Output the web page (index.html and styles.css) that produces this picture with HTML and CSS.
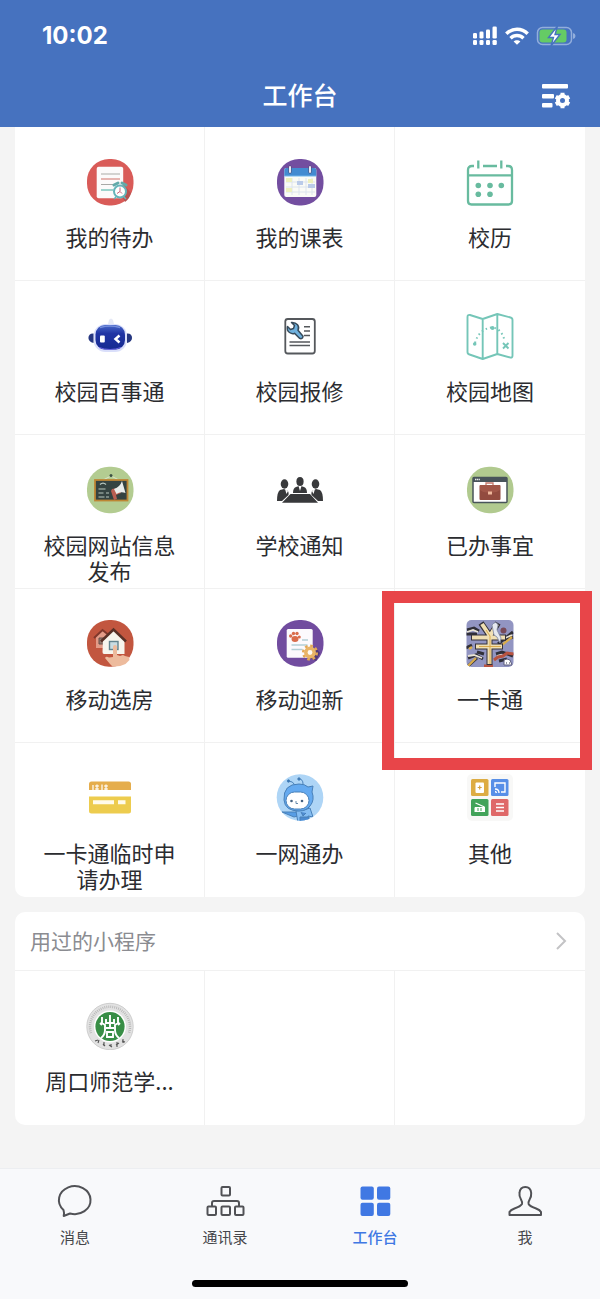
FILE: index.html
```html
<!DOCTYPE html>
<html lang="zh-CN">
<head>
<meta charset="utf-8">
<meta name="viewport" content="width=device-width, initial-scale=1">
<title>工作台</title>
<link rel="stylesheet" href="styles.css">
</head>
<body>
<header class="header">
  <div class="status">
    <span class="time">10:02</span>
    <div class="status-icons">
      <svg width="26" height="20" viewBox="0 0 26 20" fill="#fff"><rect x="1" y="7" width="4" height="5.500" rx="1.300"/><rect x="7.500" y="5.500" width="4" height="7" rx="1.300"/><rect x="14" y="3.500" width="4" height="9" rx="1.300"/><rect x="20.500" y="0.500" width="4.300" height="12" rx="1.300"/><rect x="1" y="14" width="4" height="5" rx="1.300"/><rect x="7.500" y="14" width="4" height="5" rx="1.300"/><rect x="14" y="14" width="4" height="5" rx="1.300"/><rect x="20.500" y="14" width="4.300" height="5" rx="1.300"/></svg>
      <svg width="24" height="20" viewBox="0 0 24 20" fill="none" stroke="#fff" stroke-width="3.400"><path d="M1.300 7.800C7.300 1.700 16.700 1.700 22.700 7.800"/><path d="M5.500 12.200C9.200 8.600 14.800 8.600 18.500 12.200"/><path d="M12 18.800L8.600 15.400C10.400 13.700 13.600 13.700 15.400 15.400Z" fill="#fff" stroke="none"/></svg>
      <svg width="40" height="20" viewBox="0 0 40 20"><rect x="1.500" y="1.500" width="34" height="17" rx="5" fill="none" stroke="#92aedc" stroke-width="1.500"/><path d="M37 7Q39.500 7.500 39.500 10T37 13Z" fill="#92aedc"/><rect x="3.500" y="3.500" width="27" height="13" rx="3" fill="#65cb65"/><path d="M21.500 0L12.500 11.500H17.500L15 20L24 8.500H19Z" fill="#fff" stroke="#4672bf" stroke-width="1.400"/></svg>
    </div>
  </div>
  <div class="titlebar">
    <h1>工作台</h1>
    <button class="settings" type="button" aria-label="设置">
      <svg width="30" height="28" viewBox="0 0 30 28"><g fill="#fff"><rect x="1" y="2" width="26" height="4.500" rx="1"/><rect x="1" y="12" width="12" height="4.500" rx="1"/><rect x="1" y="21" width="10.500" height="4.500" rx="1"/></g><g fill="none" stroke="#fff"><circle cx="21.500" cy="18.500" r="4.500" stroke-width="4"/><path d="M21.500 10.800v3M21.500 23.200v3M14.800 14.700l2.600 1.500M25.600 20.800l2.600 1.500M14.800 22.300l2.600-1.500M25.600 16.200l2.600-1.500" stroke-width="4"/></g></svg>
    </button>
  </div>
</header>

<main class="content">
  <section class="card card-first">
    <ul class="grid">
      <li class="cell"><a class="app" href="#todo">
        <svg class="icon" viewBox="0 0 48 48"><rect x="1" y="1" width="46.500" height="46.500" rx="22" fill="#d95b58"/><path d="M14 40h23l2 4c3-2 5-5 6-9L38 27Z" fill="#b65250"/><rect x="10.700" y="8.700" width="26.500" height="31.500" rx="2" fill="#fcfafa"/><g stroke-width="1.200" fill="none"><path d="M15 16h19M15 26.500h14" stroke="#a9a9a6"/><path d="M15 21h19" stroke="#d88880"/><path d="M15 32h12" stroke="#5eb9ad"/></g><path d="M28 27l4-2M36 25l4 2" stroke="#62aaa9" stroke-width="3" stroke-linecap="round"/><circle cx="34" cy="33.500" r="6" fill="#fff" stroke="#65b4b9" stroke-width="2"/><path d="M34 29.500v4l-3 2M34 33.500l2 2" stroke="#c7667b" fill="none"/><path d="M30 39l-2 2M38 39l2 2" stroke="#65b4b9" stroke-width="1.500"/></svg>
        <span class="label">我的待办</span></a></li>
      <li class="cell"><a class="app" href="#timetable">
        <svg class="icon" viewBox="0 0 48 48"><rect x="1" y="1" width="46.500" height="46.500" rx="22" fill="#734ea0"/><rect x="8.300" y="10" width="32" height="29" rx="2" fill="#fafbf6"/><path d="M8.300 18v-6q0-2 2-2h28q2 0 2 2v6Z" fill="#438bd1"/><path d="M8.300 18h32" stroke="#71b5eb"/><g stroke="#dce4ed" stroke-width="1"><path d="M10 24h29M10 29h29M10 34h29M16 20v17M23 20v17M30 20v17M36 20v17"/></g><path d="M10 20h6v4h-6zM32 21h5v4h-5zM10 30h6v4h-6z" fill="#edf0bd"/><path d="M21 23h6v4h-6zM32 26h7v4h-7z" fill="#bacbe9"/><g stroke="#4e4972" stroke-width="3" stroke-linecap="round"><path d="M14 9v5M34 9v5"/></g><g stroke="#e8e8f4" stroke-width="2" stroke-linecap="round"><path d="M14 9v5M34 9v5"/></g></svg>
        <span class="label">我的课表</span></a></li>
      <li class="cell"><a class="app" href="#calendar">
        <svg class="icon" viewBox="0 0 48 48" fill="none" stroke="#68bb9f" stroke-width="2.300"><path d="M8 8H6Q2 8 2 12v31q0 3.500 3.500 3.500h37q3.500 0 3.500-3.500V12q0-4-4-4h-2M17 8h14M2 17.300h44M12.300 2.500v8M35.300 2.500v8"/><g fill="#68bb9f" stroke="none"><circle cx="12.300" cy="27.500" r="2.800"/><circle cx="24" cy="27.500" r="2.800"/><circle cx="35.300" cy="27.500" r="2.800"/><circle cx="12.300" cy="36.200" r="2.800"/><circle cx="24" cy="36.200" r="2.800"/></g></svg>
        <span class="label">校历</span></a></li>

      <li class="cell"><a class="app" href="#assistant">
        <svg class="icon" viewBox="0 0 48 48"><defs><linearGradient id="robot" x1="0" y1="0" x2="0" y2="1"><stop stop-color="#4868c9"/><stop offset=".35" stop-color="#2034a4"/><stop offset="1" stop-color="#172b91"/></linearGradient></defs><path d="M22 12l1-4q2-3 4 0l1 4" fill="#e6e9f6"/><rect x="7.500" y="12" width="33.500" height="28" rx="12" fill="#dadffa"/><rect x="9.500" y="13" width="29.500" height="24.500" rx="9.500" fill="url(#robot)"/><path d="M14 15.500Q24 12.500 34 15.500" stroke="#778fdc" stroke-width="1.500" fill="none"/><path d="M7.500 21.500C1 21 .5 30 7.500 31Z" fill="#263781"/><path d="M41 21.500c6.500-.5 7 8.500 0 9.500Z" fill="#263781"/><rect x="14" y="23.500" width="4.800" height="7" rx="1" fill="#fff"/><path d="M33.500 23.500L29.500 27l4 3.500" stroke="#fff" stroke-width="2.500" fill="none"/><path d="M13 35.500q11 4 22 0" stroke="#6b65df" fill="none"/></svg>
        <span class="label">校园百事通</span></a></li>
      <li class="cell"><a class="app" href="#repair">
        <svg class="icon" viewBox="0 0 48 48"><rect x="9.300" y="7" width="29.500" height="34.500" rx="2.500" fill="#fff" stroke="#55585c" stroke-width="1.800"/><path d="M15.500 10.500l3 3-1 3-3 1-3-3q-1 4 2 6t5 .8l5 5q3 1.200 3.500-2l-5-6q1.500-3-.5-5.500t-6-2.300Z" fill="#6fb1de" stroke="#374b5b" stroke-width="1.500" stroke-linejoin="round"/><path d="M28 14.700h6M28 19h6M28 23.500h6M13.500 30H34M13.500 33.500H34" stroke="#55585c" stroke-width="1.400"/></svg>
        <span class="label">校园报修</span></a></li>
      <li class="cell"><a class="app" href="#map">
        <svg class="icon" viewBox="0 0 48 48" fill="none" stroke="#75c6b8" stroke-width="1.900" stroke-linejoin="round"><path d="M16.700 7L4 3Q1.500 2.500 1.500 5v35q0 2 2 2.500L16.700 47l14.600-5 13 3.500q2.200.5 2.200-2V8q0-2-2-2.500L31.300 2ZM16.700 7v40M31.300 2v40"/><path d="M9 31Q13 17 26 15.500Q35 16 38.500 28" stroke-width="2" stroke-dasharray="1.500 3"/><circle cx="8.700" cy="32" r="1.800" fill="#75c6b8" stroke="none"/><circle cx="26.500" cy="16" r="2" fill="#75c6b8" stroke="none"/><path d="M37 31l5.500 5.500M42.500 31L37 36.500"/></svg>
        <span class="label">校园地图</span></a></li>

      <li class="cell"><a class="app" href="#publish">
        <svg class="icon" viewBox="0 0 48 48"><rect x="1" y=".7" width="46.500" height="46.500" rx="22" fill="#b3cc91"/><path d="M17 14l8-4 8 4" fill="none" stroke="#dce5c9"/><circle cx="25" cy="9.500" r="1.500" fill="#3c5144"/><rect x="9" y="14" width="32.500" height="20.500" fill="#344341" stroke="#bd8634" stroke-width="1.800"/><path d="M14 18.500q3-3 6 0M12.500 23h7M12.500 27h5M12.500 31h6M20 27h3M20 31h3" stroke="#b8c7be" stroke-width="1.200" fill="none"/><path d="M26 23l6-1 3 5-5 2 1 4-3 1-3-9Z" fill="#b95e51"/><path d="M28 23q6-2 8-8l3.500 12q-5-2-9 1Z" fill="#e9edeb"/></svg>
        <span class="label">校园网站信息发布</span></a></li>
      <li class="cell"><a class="app" href="#notice">
        <svg class="icon" viewBox="0 0 48 48" fill="#38393b"><ellipse cx="8.500" cy="18" rx="3.800" ry="4.700"/><ellipse cx="24" cy="15.500" rx="3.600" ry="4.500"/><ellipse cx="39.500" cy="18" rx="3.800" ry="4.700"/><path d="M1 35q0-9 3-11l4-1 4 2q1 2 .5 4L6 35ZM47 35q0-9-3-11l-4-1-4 2q-1 2-.5 4L42 35ZM17 27q0-5 3-6l3-1h2l3 1q3 1 3 6ZM14.500 28h19.500l8 8.700H6Z"/><path d="M9 23l1.500 5L12 25M39 23l-1.500 5-1.500-3M22.500 20l1.500 5 1.500-5" fill="#fff"/></svg>
        <span class="label">学校通知</span></a></li>
      <li class="cell"><a class="app" href="#done">
        <svg class="icon" viewBox="0 0 48 48"><rect x="1" y=".7" width="46.500" height="46.500" rx="22" fill="#b1ca8f"/><rect x="7" y="11.500" width="34" height="25" rx="1" fill="#fff" stroke="#48545a" stroke-width="1.500"/><path d="M7 11.500h34V16H7Z" fill="#48545a"/><path d="M9 13.500h5" stroke="#e6e8e8" stroke-width="1.500" stroke-dasharray="1.300 .5"/><path d="M20 19v-2h7v2" fill="none" stroke="#c57a6d" stroke-width="1.300"/><rect x="13.500" y="19" width="21" height="15" rx="1" fill="#924b3f"/><path d="M14 19h20v5q-4 2.500-7 2.500h-6q-4 0-7-2.500Z" fill="#a15749"/><rect x="22" y="25.500" width="4" height="3" fill="#efb89c"/></svg>
        <span class="label">已办事宜</span></a></li>

      <li class="cell"><a class="app" href="#housing">
        <svg class="icon" viewBox="0 0 48 48"><rect x="1" y="0" width="46.500" height="46.700" rx="22" fill="#c2563f"/><path d="M10 16l7-6 8 7v11H10Z" fill="#e29b87"/><path d="M8 18l8.500-8 5 4" stroke="#80382c" stroke-width="2" fill="none"/><path d="M13 18h5v6h-5Z" fill="#92796e" stroke="#664e49"/><path d="M17 20L27.500 10 38.500 20v14H18q-1.500 0-1.500-2Z" fill="#f7f5ed"/><path d="M15 21.500L27.500 9.500 40 21.500" fill="none" stroke="#593127" stroke-width="2.500"/><rect x="23.500" y="21.500" width="8.500" height="8" fill="#c9dce2" stroke="#63848f" stroke-width="1.400"/><path d="M27 37V27q0-2 2-2t2 2v8l3 1 3-1 2 1 4 1 .5 3-4 4q-6 3-13 2.500L24 44l-5-6q1-2 4-.5Z" fill="#edbb9d"/></svg>
        <span class="label">移动选房</span></a></li>
      <li class="cell"><a class="app" href="#welcome">
        <svg class="icon" viewBox="0 0 48 48"><rect x="1" y="0" width="46.500" height="46.700" rx="22" fill="#714c9f"/><path d="M34 38l6 3 4-8-4-5Z" fill="#523a78"/><rect x="10.700" y="9" width="26" height="28.700" rx="1.500" fill="#fcfafd"/><g fill="#d96c4b"><ellipse cx="19" cy="19" rx="3.500" ry="3"/><circle cx="14.700" cy="16" r="1.700"/><circle cx="17.500" cy="13.500" r="1.700"/><circle cx="21" cy="13.500" r="1.700"/><circle cx="23.300" cy="17" r="1.500"/></g><path d="M26 20h6M15.500 25h16M15.500 29.500h11" stroke="#b3ced5" stroke-width="1.300"/><circle cx="34" cy="32.500" r="6.800" fill="none" stroke="#e4a854" stroke-width="2.500" stroke-dasharray="2.700 2.640"/><circle cx="34" cy="32.500" r="4.200" fill="#fffaf2" stroke="#e9b467" stroke-width="3.500"/></svg>
        <span class="label">移动迎新</span></a></li>
      <li class="cell marked"><a class="app" href="#campus-card">
        <svg class="icon" viewBox="0 0 48 48"><defs><clipPath id="pay-clip"><rect x=".5" width="47" height="47" rx="5"/></clipPath></defs><g clip-path="url(#pay-clip)" fill="none"><path d="M0 0h48v47H0Z" fill="#9295c2"/><g stroke="#302f38" stroke-width="3"><path d="M1 10l7-2 5 3M0 14h11M0 28l6-3M2 38l8-3 7 4M30 34l6-2 11 4M33 41l8-2M32 24l15-12M2 46l9-8M11 32l7 2M38 20l9-3"/></g><g stroke="#e9e4d6" stroke-width="1.800"><path d="M1 12l6-2 5 2M2 36l6-1 8 3M37 19l9-4M31 36l5-1"/></g><path d="M28 40l4-3 5-1 4-3 7 1M18 46h9" stroke="#b75340" stroke-width="3"/><path d="M2 46l8-8M36 25l10-8M3 29l3-2" stroke="#d9ad4d" stroke-width="2.300"/><circle cx="37.500" cy="10.500" r="3" fill="#794a58"/><g stroke="#34313a" stroke-width="6"><path d="M15 3l9 13L32 3M23.500 15v30M5 17.500h35M9 26.500h28"/></g><g stroke="#f0dfb3" stroke-width="4"><path d="M16 4l8 12 7-12M23.500 15v29M6 17.500h33M10 26.500h26"/></g><path d="M20 10l4 6v28M13 26.500h22" stroke="#d9aa4d" stroke-width="1"/><path d="M26 5q4-5 6 0l-1 5 4 8-1 5-3-6-3-2Z" fill="#e5e8ef" stroke="#7d86a1" stroke-width=".8"/><path d="M38 40q3-2 6 0l2 5h-8Z" fill="#fff" stroke="#5c5c7c"/><path d="M40 43h1M43 43h1" stroke="#33334a"/></g></svg>
        <span class="label">一卡通</span></a></li>

      <li class="cell"><a class="app" href="#temporary-card">
        <svg class="icon" viewBox="0 0 48 48"><path d="M3 16v-6q0-2.500 2.500-2.500h37Q45 7.500 45 10v6Z" fill="#e5ad4c"/><path d="M3 22.500h42V37q0 2.500-2.500 2.500h-37Q3 39.500 3 37Z" fill="#edcc4e"/><path d="M7 11v5M9 12h4M9 15h4M11 10.500V16M16 10.500V16M18 12h4M20 10.500V16M18 15h4" stroke="#fff" fill="none" stroke-width="1.200"/><path d="M7 28.300h21M32 28.300h7.500" stroke="#fffbea" stroke-width="4"/></svg>
        <span class="label">一卡通临时申请办理</span></a></li>
      <li class="cell"><a class="app" href="#online-services">
        <svg class="icon" viewBox="0 0 48 48"><defs><clipPath id="bee-clip"><circle cx="24" cy="23.500" r="23.300"/></clipPath></defs><circle cx="24" cy="23.500" r="23.300" fill="#aed5f6"/><g clip-path="url(#bee-clip)" stroke="#4980b8" stroke-width="1"><path d="M19 11Q17 7 12 7M27 10q0-5-4-5" fill="none"/><circle cx="12.500" cy="7" r="1.200" fill="#3675b2"/><circle cx="23" cy="5" r="1.200" fill="#3675b2"/><path d="M6 38h14l2 4-4 1Z" fill="#579de5"/><path d="M20 37l8-1 6-2 3 9-5-1v7H22Z" fill="#85bdf2"/><path d="M25 38l2 4 3-3M24 43h9v5h-9Z" fill="#4d8bd1"/><path d="M8 26Q7 10 23 10q6 0 9 3l5-1-1 6q3 8-2 14-4 5-11 5Q9 37 8 26Z" fill="#65aaf0"/><rect x="10" y="18" width="23" height="17" rx="8.500" fill="#fff"/></g><circle cx="15.500" cy="27" r="1.300" fill="#456282"/><circle cx="26" cy="27" r="1.300" fill="#456282"/><path d="M20 27v2.500h2" stroke="#668bae" fill="none"/></svg>
        <span class="label">一网通办</span></a></li>
      <li class="cell"><a class="app" href="#other">
        <svg class="icon" viewBox="0 0 48 48"><rect x="1" y="0" width="46" height="47" rx="5" fill="#f8f8f7"/><rect x="5" y="5" width="17.500" height="17" rx="1.500" fill="#ddac43"/><rect x="25" y="5" width="17.500" height="17" rx="1.500" fill="#588fe7"/><rect x="5" y="25" width="17.500" height="17" rx="1.500" fill="#42a35a"/><rect x="25" y="25" width="17.500" height="17" rx="1.500" fill="#df6969"/><rect x="9.500" y="8.500" width="8.500" height="10.500" rx="1" fill="#fff"/><path d="M13.700 11.500v4M11.700 13.500h4" stroke="#d6a33d" stroke-width="1.200"/><path d="M29 13V9h10v9h-4M29 15q4 0 4 4M29 17.500q1 0 1.500 1.500" fill="none" stroke="#fff" stroke-width="1.400"/><path d="M9 33h10v5H8.500v-4Z" fill="#fff"/><path d="M9.500 29l9 4M12 35.500h1M15 35.500h1" stroke="#fff" stroke-width="1.300"/><path d="M12 34v3M15 34v3" stroke="#42a35a"/><path d="M30 30h8M30 33.500h8M30 37h8" stroke="#fff" stroke-width="1.700"/></svg>
        <span class="label">其他</span></a></li>
    </ul>
  </section>

  <section class="card">
    <a class="section-head" href="#recent"><h2>用过的小程序</h2><svg width="12" height="20" viewBox="0 0 12 20" fill="none" stroke="#c3c3c5" stroke-width="2"><path d="M2 2l8 8-8 8"/></svg></a>
    <ul class="grid">
      <li class="cell"><a class="app" href="#university">
        <svg class="icon" viewBox="0 0 48 48" fill="none"><circle cx="24" cy="24.500" r="23.200" fill="#e2e2e2" stroke="#cecece"/><path d="M5 31A20 20 0 1 1 43 31" stroke="#b4b4b4" stroke-width="2.500" stroke-dasharray=".8 1.200"/><circle cx="24" cy="24.500" r="16" fill="#fff"/><circle cx="24" cy="24.500" r="14.600" fill="#388e46"/><g stroke="#fff" stroke-width="1.900"><path d="M16 15v6l3 2v5q0 5-4 8M32 15v6l-3 2v5q0 5 4 8M24 13v13M20 17v4h8v-4M20 26h8M21 30h6v5h-6ZM14 21l2 2M34 21l-2 2"/></g><path d="M9 39l3-1M12 41l1-3M17 42l2 2M18 40v4M23 43l3 2M25 42v3M30 43l3-2M31 40v5M36 39l3 1M37 37v4" stroke="#555" stroke-width="1.100"/></svg>
        <span class="label">周口师范学...</span></a></li>
      <li class="cell"></li>
      <li class="cell"></li>
    </ul>
  </section>
</main>

<nav class="tabbar">
  <div class="tabs">
    <a class="tab" href="#messages"><svg width="40" height="36" viewBox="0 0 40 36" fill="none" stroke="#515256" stroke-width="2"><path d="M8.500 27A15.800 14 0 1 1 15 30.500L8.700 33Q9.500 30 8.500 27Z" stroke-linejoin="round"/></svg><span>消息</span></a>
    <a class="tab" href="#contacts"><svg width="40" height="36" viewBox="0 0 40 36" fill="none" stroke="#515256" stroke-width="2"><rect x="16.500" y="4" width="8.500" height="8.500" rx="1"/><rect x="2.500" y="23.500" width="8.500" height="8.500" rx="1"/><rect x="16.500" y="23.500" width="8.500" height="8.500" rx="1"/><rect x="30" y="23.500" width="8.500" height="8.500" rx="1"/><path d="M7 23v-3q0-2 2-2h23q2 0 2 2v3"/></svg><span>通讯录</span></a>
    <a class="tab active" href="#workbench" aria-current="page"><svg width="40" height="36" viewBox="0 0 40 36" fill="#4078e3"><rect x="5.500" y="3.500" width="13.300" height="13.300" rx="2"/><rect x="22" y="3.500" width="13.300" height="13.300" rx="2"/><rect x="5.500" y="19.700" width="13.300" height="13.300" rx="2"/><rect x="22" y="19.700" width="13.300" height="13.300" rx="2"/></svg><span>工作台</span></a>
    <a class="tab" href="#me"><svg width="40" height="36" viewBox="0 0 40 36" fill="none" stroke="#515256" stroke-width="2" stroke-linejoin="round"><path d="M4.500 32V29q1-2 5-3.500 6-2 7.500-4.500.7-1.500-1-4.500-2-3-1.500-6.500.5-6 5.800-6t5.900 6q.3 3.500-1.600 6.500-1.700 3-1 4.500 1.400 2.500 7.500 4.500 4 1.500 4.900 3.500v3Z"/></svg><span>我</span></a>
  </div>
  <div class="home-indicator"></div>
</nav>
</body>
</html>
```

FILE: styles.css
```css
* { box-sizing: border-box; }

body {
  margin: 0;
  min-height: 100vh;
  display: flex;
  flex-direction: column;
  background: #f4f4f4;
  color: #2b2c30;
  font-family: "Noto Sans CJK SC", sans-serif;
}

h1, h2, ul { margin: 0; padding: 0; font-weight: 400; }
ul { list-style: none; }
a { color: inherit; text-decoration: none; }
svg { display: block; flex: none; }

.header {
  background: #4672bf;
  color: #fff;
  padding-bottom: 7px;
}

.status {
  display: flex;
  align-items: center;
  justify-content: space-between;
  height: 72px;
  padding: 0 24px 0 42px;
}

.time {
  font: 700 24px/28px Inter, sans-serif;
}

.status-icons {
  display: flex;
  align-items: center;
  gap: 7px;
}

.titlebar {
  display: grid;
  grid-template-columns: 1fr auto 1fr;
  align-items: center;
  height: 48px;
  padding: 0 29px;
}

.titlebar h1 {
  grid-column: 2;
  padding-bottom: 4px;
  font-size: 25px;
  font-weight: 500;
  line-height: 36px;
}

.settings {
  justify-self: end;
  padding: 0;
  border: 0;
  background: none;
}

.content {
  flex: 1;
  display: flex;
  flex-direction: column;
  gap: 15px;
  padding: 0 15px 43px;
}

.card {
  background: #fff;
  border-radius: 10px;
}

.card-first { border-radius: 0 0 10px 10px; }

.grid {
  display: grid;
  grid-template-columns: repeat(3, 1fr);
}

.cell {
  position: relative;
  min-height: 154px;
  border-right: 1px solid #f1f1f1;
  border-bottom: 1px solid #f1f1f1;
}

.cell:nth-child(3n) { border-right: 0; }
.cell:nth-last-child(-n+3) { border-bottom: 0; }

.app {
  display: flex;
  flex-direction: column;
  align-items: center;
  gap: 17px;
  padding: 31px 24px 0;
}

.icon {
  width: 48px;
  height: 48px;
}

.label {
  max-width: 140px;
  font-size: 22px;
  line-height: 26px;
  text-align: center;
}

.marked::after {
  content: "";
  position: absolute;
  z-index: 1;
  inset: 2px -7px -28px -13px;
  border: 12px solid #e84549;
  pointer-events: none;
}

.section-head {
  display: flex;
  align-items: center;
  justify-content: space-between;
  height: 59px;
  padding: 0 18px 0 15px;
  border-bottom: 1px solid #f1f1f1;
}

.section-head h2 {
  padding-bottom: 2px;
  color: #8b8c91;
  font-size: 21px;
  line-height: 30px;
}

.tabbar {
  display: flex;
  flex-direction: column;
  align-items: center;
  gap: 32px;
  padding: 14px 0 12px;
  border-top: 1px solid #eceef1;
  background: #f8f9fb;
}

.tabs {
  display: grid;
  grid-template-columns: repeat(4, 1fr);
  width: 100%;
}

.tab {
  display: flex;
  flex-direction: column;
  align-items: center;
  gap: 7px;
  color: #45464a;
  font-size: 15px;
  line-height: 22px;
}

.active {
  color: #4078e3;
  font-weight: 500;
}

.home-indicator {
  width: 36%;
  height: 7px;
  border-radius: 4px;
  background: #000;
}
```
